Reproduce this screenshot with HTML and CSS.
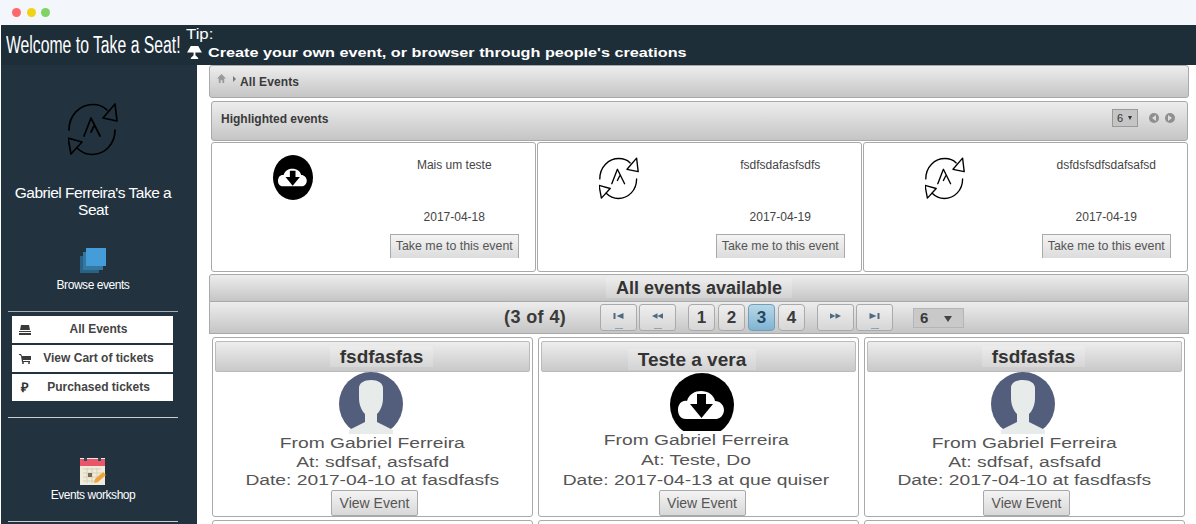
FILE: index.html
```html
<!DOCTYPE html>
<html lang="en">
<head>
    <meta charset="UTF-8">
    <title>Take a Seat</title>
    <link rel="stylesheet" href="styles.css">
</head>
<body>
    <svg class="defs" width="0" height="0">
        <symbol id="logo" viewBox="0 0 50 53">
            <g fill="none" stroke="#000" stroke-width="1.700" stroke-linejoin="round" stroke-linecap="round">
                <path d="M1 27 C1 12 12 1.500 25 1.500 C30 1.500 35 3 39 7"/>
                <path d="M47 27 C47 41 37 51.500 24 51.500 C18 51.500 13 49 9 45"/>
                <path d="M47 1 L49 18 L35 15 Z"/>
                <path d="M0 35 L14 39 L3 51 Z"/>
                <path d="M16 33 L23 15 L32 33 M26 23 L23 29"/>
            </g>
        </symbol>
        <symbol id="cloud" viewBox="0 0 64 64">
            <path d="M16 46 C10 46 8 41 8 37 C8 31 12 27 17 28 C19 21 25 18 31 18 C38 18 44 22 45 28 C50 28 54 32 54 37 C54 42 50 46 46 46 Z" fill="#fff"/>
            <path d="M27 21 H36 V31 H43 L31.500 45 L20 31 H27 Z" fill="#000"/>
        </symbol>
        <symbol id="person" viewBox="0 0 64 62">
            <circle cx="32" cy="32" r="32" fill="#535d7c"/>
            <path d="M10 62 L10 58 L26 50 L26 42 C22 38 20 32 20 26 L20 16 C20 11 25 8 32 8 C39 8 44 11 44 16 L44 26 C44 32 42 38 38 42 L38 50 L54 58 L54 62 Z" fill="#e7ebea"/>
        </symbol>
    </svg>

    <div class="chrome">
        <span class="dot dot-red"></span>
        <span class="dot dot-yellow"></span>
        <span class="dot dot-green"></span>
    </div>

    <header class="topbar">
        <h1 class="welcome">Welcome to Take a Seat!</h1>
        <div class="tip">
            <div class="tip-label">Tip:</div>
            <div class="tip-row">
                <svg class="lamp" viewBox="0 0 16 14"><path d="M4 0 H12 L16 7 H0 Z M7 7 H9 V10 L12 13 V14 H4 V13 L7 10 Z" fill="#fff"/></svg>
                <span class="tip-text">Create your own event, or browser through people's creations</span>
            </div>
        </div>
    </header>

    <div class="layout">
        <aside class="sidebar">
            <svg class="side-logo"><use href="#logo"/></svg>
            <div class="side-name">Gabriel Ferreira's Take a Seat</div>

            <svg class="side-icon side-icon-browse" viewBox="0 0 26 25">
                <rect x="0" y="8" width="19" height="17" fill="#2a6187"/>
                <rect x="3" y="4" width="20" height="18" fill="#35789f"/>
                <rect x="6" y="0" width="20" height="18" fill="#449cd9"/>
            </svg>
            <div class="side-label side-label-browse">Browse events</div>
            <div class="side-rule side-rule-first"></div>

            <nav class="menu">
                <a class="menu-item">
                    <svg class="menu-icon" viewBox="0 0 12 10"><path d="M2 0 H10 L11 5 H1 Z M0 6 H12 V7 H0 Z M0 8 H12 V10 H0 Z" fill="#3a3a3a"/></svg>
                    <span class="menu-text">All Events</span>
                </a>
                <a class="menu-item">
                    <svg class="menu-icon" viewBox="0 0 12 10"><path d="M0 0 H2 L3 2 H12 V6 H4 L4 7 H11 V8 H3 L2 2 L1 1 H0 Z" fill="#3a3a3a"/><circle cx="4" cy="9" r="1" fill="#3a3a3a"/><circle cx="10" cy="9" r="1" fill="#3a3a3a"/></svg>
                    <span class="menu-text">View Cart of tickets</span>
                </a>
                <a class="menu-item">
                    <span class="menu-icon menu-glyph">₽</span>
                    <span class="menu-text">Purchased tickets</span>
                </a>
            </nav>
            <div class="side-rule side-rule-second"></div>

            <svg class="side-icon side-icon-workshop" viewBox="0 0 26 27">
                <rect x="0" y="0" width="25" height="27" fill="#f0ecd9"/>
                <rect x="0" y="1" width="25" height="7" fill="#e9566b"/>
                <rect x="4" y="0" width="3" height="3" fill="#2b4a5e"/>
                <rect x="18" y="0" width="3" height="3" fill="#2b4a5e"/>
                <path d="M3 11 H21 M3 15 H21 M3 19 H21 M3 23 H17 M7 10 V25 M12 10 V25 M17 10 V25" stroke="#d5d0ba" fill="none"/>
                <rect x="8" y="15" width="4" height="4" fill="#7a6a58"/>
                <path d="M14 25 L15 21 L23 14 L26 17 L18 24 Z" fill="#f0a33c"/>
            </svg>
            <div class="side-label side-label-workshop">Events workshop</div>
            <div class="side-rule side-rule-third"></div>
        </aside>

        <main class="content">
            <div class="bar breadcrumb">
                <svg class="crumb-home" viewBox="0 0 10 10"><path d="M5 0 L10 5 H8 V10 H6 V7 H4 V10 H2 V5 H0 Z" fill="#9a9a9a"/></svg>
                <span class="crumb-caret"></span>
                <span class="crumb-text">All Events</span>
            </div>

            <section class="highlight">
                <div class="bar highlight-head">
                    <span class="highlight-title">Highlighted events</span>
                    <span class="mini-select">6 <i class="mini-arrow"></i></span>
                    <span class="mini-nav mini-prev"></span>
                    <span class="mini-nav mini-next"></span>
                </div>
                <div class="highlight-grid">
                    <div class="hl-card">
                        <div class="hl-media"><svg class="hl-cloud"><use href="#cloud"/></svg></div>
                        <div class="hl-info">
                            <div class="hl-name">Mais um teste</div>
                            <div class="hl-date">2017-04-18</div>
                            <button class="hl-btn">Take me to this event</button>
                        </div>
                    </div>
                    <div class="hl-card">
                        <div class="hl-media"><svg class="hl-logo"><use href="#logo"/></svg></div>
                        <div class="hl-info">
                            <div class="hl-name">fsdfsdafasfsdfs</div>
                            <div class="hl-date">2017-04-19</div>
                            <button class="hl-btn">Take me to this event</button>
                        </div>
                    </div>
                    <div class="hl-card">
                        <div class="hl-media"><svg class="hl-logo"><use href="#logo"/></svg></div>
                        <div class="hl-info">
                            <div class="hl-name">dsfdsfsdfsdafsafsd</div>
                            <div class="hl-date">2017-04-19</div>
                            <button class="hl-btn">Take me to this event</button>
                        </div>
                    </div>
                </div>
            </section>

            <div class="bar all-head"><span class="strip">All events available</span></div>
            <div class="bar pager">
                <span class="pager-count">(3 of 4)</span>
                <span class="pg-btn pg-first"><svg viewBox="0 0 10 6"><path d="M0 0 H2 V6 H0 Z M10 0 V6 L3 3 Z" fill="#4c6a80"/></svg></span>
                <span class="pg-btn pg-prev"><svg viewBox="0 0 12 6"><path d="M0 3 L6 0 V6 Z M6 3 L12 0 V6 Z" fill="#4c6a80"/></svg></span>
                <span class="pg-num">1</span>
                <span class="pg-num">2</span>
                <span class="pg-num pg-active">3</span>
                <span class="pg-num">4</span>
                <span class="pg-btn pg-next"><svg viewBox="0 0 12 6"><path d="M0 0 L6 3 L0 6 Z M6 0 L12 3 L6 6 Z" fill="#4c6a80"/></svg></span>
                <span class="pg-btn pg-last"><svg viewBox="0 0 10 6"><path d="M0 0 L7 3 L0 6 Z M8 0 H10 V6 H8 Z" fill="#4c6a80"/></svg></span>
                <span class="pg-select">6 <i class="pg-arrow"></i></span>
            </div>

            <div class="events">
                <article class="event">
                    <h3 class="event-title"><span class="strip strip-a">fsdfasfas</span></h3>
                    <svg class="event-img"><use href="#person"/></svg>
                    <div class="event-lines">
                        <p><span class="stretch">From Gabriel Ferreira</span></p>
                        <p><span class="stretch">At: sdfsaf, asfsafd</span></p>
                        <p><span class="stretch">Date: 2017-04-10 at fasdfasfs</span></p>
                    </div>
                    <button class="event-btn">View Event</button>
                </article>
                <article class="event event-cloud">
                    <h3 class="event-title"><span class="strip strip-b">Teste a vera</span></h3>
                    <svg class="event-img" viewBox="0 0 64 58">
                        <circle cx="32" cy="32" r="32" fill="#000"/>
                        <use href="#cloud" width="64" height="64"/>
                    </svg>
                    <div class="event-lines">
                        <p><span class="stretch">From Gabriel Ferreira</span></p>
                        <p><span class="stretch">At: Teste, Do</span></p>
                        <p><span class="stretch">Date: 2017-04-13 at que quiser</span></p>
                    </div>
                    <button class="event-btn">View Event</button>
                </article>
                <article class="event">
                    <h3 class="event-title"><span class="strip strip-a">fsdfasfas</span></h3>
                    <svg class="event-img"><use href="#person"/></svg>
                    <div class="event-lines">
                        <p><span class="stretch">From Gabriel Ferreira</span></p>
                        <p><span class="stretch">At: sdfsaf, asfsafd</span></p>
                        <p><span class="stretch">Date: 2017-04-10 at fasdfasfs</span></p>
                    </div>
                    <button class="event-btn">View Event</button>
                </article>
                <article class="event"></article>
                <article class="event"></article>
                <article class="event"></article>
            </div>
        </main>
    </div>
</body>
</html>
```

FILE: styles.css
```css
html, body {
    height: 524px;
    overflow: hidden;
}
body {
    margin: 0;
    background-color: #fff;
    font-family: "Liberation Sans", Arial, sans-serif;
    color: #333;
}
.defs {
    position: absolute;
}

/* window chrome */
.chrome {
    height: 25px;
    background-color: #f3f6fa;
    display: flex;
    align-items: center;
    padding-left: 12px;
    gap: 5.500px;
}
.dot {
    width: 9px;
    height: 9px;
    border-radius: 50%;
}
.dot-red { background-color: #fc6a6e; }
.dot-yellow { background-color: #f2d214; }
.dot-green { background-color: #7fd264; }

/* top bar */
.topbar {
    height: 40px;
    margin-left: 1px;
    background-color: #1e2e39;
    color: #fff;
    display: flex;
}
.welcome {
    width: 185px;
    margin: 0;
    padding-left: 5px;
    box-sizing: border-box;
    font-size: 23px;
    font-weight: normal;
    line-height: 40px;
    white-space: nowrap;
    transform: scaleX(0.685);
    transform-origin: 5px 0;
}
.tip {
    font-size: 14px;
}
.tip-label {
    line-height: 16px;
    margin-top: 1px;
    transform: scaleX(1.2);
    transform-origin: 0 0;
}
.tip-row {
    display: flex;
    align-items: center;
    margin-top: 1px;
    height: 18px;
}
.lamp {
    width: 15px;
    height: 13px;
    margin: 0 6px 0 1px;
}
.tip-text {
    white-space: nowrap;
    font-weight: bold;
    font-size: 13px;
    transform: scaleX(1.247);
    transform-origin: 0 0;
}

.layout {
    display: flex;
    align-items: flex-start;
}

/* sidebar */
.sidebar {
    width: 196px;
    height: 459px;
    margin-left: 1px;
    flex: none;
    background-color: #22333f;
    color: #fff;
    display: flex;
    flex-direction: column;
    align-items: center;
    padding-right: 12px;
    box-sizing: border-box;
    overflow: hidden;
}
.side-logo {
    width: 50px;
    height: 53px;
    margin-top: 38px;
    flex: none;
}
.side-name {
    width: 170px;
    margin-top: 28px;
    font-size: 15.500px;
    line-height: 17px;
    text-align: center;
    letter-spacing: -0.5px;
}
.side-icon {
    flex: none;
    width: 26px;
}
.side-icon-browse {
    height: 25px;
    margin-top: 30px;
}
.side-icon-workshop {
    height: 27px;
    margin-top: 40px;
}
.side-label {
    font-size: 12px;
    line-height: 14px;
    white-space: nowrap;
    letter-spacing: -0.45px;
}
.side-label-browse {
    margin-top: 5px;
}
.side-label-workshop {
    margin-top: 3px;
}
.side-rule {
    width: 170px;
    height: 1px;
    flex: none;
    background-color: #c8cfd4;
}
.side-rule-first { margin-top: 19px; background-color: #a3adb3; }
.side-rule-second { margin-top: 16px; }
.side-rule-third { margin-top: 19px; }

.menu {
    width: 161px;
    margin: 4px 2px 0 0;
    display: flex;
    flex-direction: column;
    gap: 2px;
}
.menu-item {
    height: 27px;
    padding: 0 6px 0 7px;
    background-color: #fff;
    display: flex;
    align-items: center;
    color: #444;
    font-size: 12px;
    font-weight: bold;
}
.menu-icon {
    width: 12px;
    height: 10px;
    flex: none;
}
.menu-glyph {
    height: auto;
    font-size: 13px;
    line-height: 14px;
    text-align: center;
    color: #333;
}
.menu-text {
    flex: 1;
    padding-bottom: 2px;
    text-align: center;
    white-space: nowrap;
}

/* main column */
.content {
    margin-left: 12px;
    width: 980px;
    height: 459px;
    overflow: hidden;
    flex: none;
}
.bar {
    background: linear-gradient(#ededed, #c5c5c5);
    border: 1px solid #a9a9a9;
    box-sizing: border-box;
    font-weight: bold;
    color: #3a3a3a;
}
.breadcrumb {
    height: 33px;
    border-radius: 3px;
    display: flex;
    align-items: center;
    font-size: 12px;
    padding-left: 7px;
}
.crumb-home {
    width: 9px;
    height: 9px;
    margin-bottom: 7px;
}
.crumb-caret {
    width: 0;
    height: 0;
    margin: 0 4px 6px 7px;
    border-left: 3px solid #777;
    border-top: 3px solid transparent;
    border-bottom: 3px solid transparent;
}
.crumb-text {
    letter-spacing: 0.1px;
}

.highlight {
    margin: 3px 1px 0 2px;
}
.highlight-head {
    height: 40px;
    border-radius: 3px;
    display: flex;
    align-items: center;
    font-size: 12px;
    padding-left: 9px;
}
.highlight-title {
    flex: 1;
    padding-bottom: 4px;
}
.mini-select {
    width: 26px;
    height: 18px;
    margin: 0 11px 6px 0;
    box-sizing: border-box;
    padding-left: 4px;
    background-color: #c5c5c5;
    border: 1px solid #999;
    font-weight: normal;
    font-size: 11px;
    line-height: 16px;
    color: #333;
}
.mini-arrow {
    display: inline-block;
    border-top: 4px solid #333;
    border-left: 2.500px solid transparent;
    border-right: 2.500px solid transparent;
    margin: 0 0 2px 2px;
}
.mini-nav {
    width: 10px;
    height: 10px;
    margin: 0 6px 6px 0;
    border-radius: 50%;
    background-color: #8f8f8f;
    display: flex;
    align-items: center;
    justify-content: center;
}
.mini-nav::after {
    content: "";
    border-top: 3px solid transparent;
    border-bottom: 3px solid transparent;
}
.mini-prev::after { border-right: 4px solid #ddd; }
.mini-next::after { border-left: 4px solid #ddd; }
.mini-next {
    margin-right: 12px;
}
.highlight-grid {
    margin-top: 1px;
    display: grid;
    grid-template-columns: 325px 325px 325px;
    gap: 1px;
}
.hl-card {
    height: 130px;
    box-sizing: border-box;
    border: 1px solid #a9a9a9;
    border-radius: 3px;
    background-color: #fff;
    display: grid;
    grid-template-columns: 1fr 1fr;
}
.hl-media {
    display: flex;
    justify-content: center;
    padding-top: 12px;
}
.hl-cloud {
    width: 40px;
    height: 45px;
    margin-left: 1px;
    background-color: #000;
    border-radius: 50%;
}
.hl-logo {
    width: 40px;
    height: 43px;
    margin: 2px 0 0 1px;
}
.hl-info {
    display: flex;
    flex-direction: column;
    align-items: center;
    font-size: 12px;
    color: #444;
}
.hl-name {
    margin-top: 15px;
    line-height: 14px;
}
.hl-date {
    margin-top: 38px;
    line-height: 14px;
}
.hl-btn {
    width: 129px;
    height: 24px;
    margin-top: 10px;
    padding: 0 0 2px;
    background: linear-gradient(#f4f4f4, #dcdcdc);
    border: 1px solid #a9a9a9;
    border-bottom: none;
    font-family: inherit;
    font-size: 12.400px;
    color: #555;
}

/* all events */
.all-head {
    height: 28px;
    margin-top: 2px;
    font-size: 18px;
    line-height: 26px;
    text-align: center;
    border-radius: 3px 3px 0 0;
    color: #333;
}
.pager {
    height: 32px;
    display: flex;
    align-items: center;
    border-top: none;
    font-size: 17px;
    padding-left: 294px;
    color: #3a3a3a;
}
.pager-count {
    width: 96px;
    flex: none;
    font-size: 18px;
    letter-spacing: 0.4px;
}
.pg-btn {
    width: 37px;
    height: 27px;
    box-sizing: border-box;
    margin-right: 2px;
    border: 1px solid #aaa;
    border-radius: 3px;
    background: linear-gradient(#efefef, #d6d6d6);
    display: flex;
    flex-direction: column;
    align-items: center;
    padding-top: 8px;
}
.pg-btn svg {
    width: 11px;
    height: 6px;
    flex: none;
}
.pg-first::after,
.pg-prev::after,
.pg-last::after {
    content: "";
    width: 8px;
    height: 1px;
    margin-top: 9px;
    background-color: #8ea2b1;
}
.pg-prev { margin-right: 12px; }
.pg-next { margin-left: 9px; }
.pg-last { margin-right: 20px; }
.pg-num {
    width: 27px;
    height: 27px;
    box-sizing: border-box;
    margin: -1px 3px 0 0;
    border: 1px solid #aaa;
    border-radius: 4px;
    background: linear-gradient(#efefef, #d6d6d6);
    text-align: center;
    line-height: 25px;
}
.pg-active {
    background: linear-gradient(#b9d8e8, #7fb3d2);
    border-color: #6e9fbd;
    color: #24475f;
}
.pg-select {
    width: 51px;
    height: 20px;
    box-sizing: border-box;
    padding-left: 6px;
    background-color: #c9c9c9;
    border: 1px solid #b5b5b5;
    font-size: 15px;
    line-height: 18px;
}
.pg-arrow {
    display: inline-block;
    border-top: 6px solid #444;
    border-left: 4px solid transparent;
    border-right: 4px solid transparent;
    margin: 0 0 1px 11px;
}
.events {
    margin: 3px 0 0 3px;
    display: grid;
    grid-template-columns: 321px 321px 321px;
    grid-auto-rows: 180px;
    gap: 3px 5px;
}
.event {
    box-sizing: border-box;
    border: 1px solid #a9a9a9;
    border-radius: 3px;
    display: flex;
    flex-direction: column;
    align-items: center;
    padding: 3px 1px 0;
}
.event-title {
    width: 315px;
    height: 31px;
    margin: 0;
    flex: none;
    background: linear-gradient(#ededed, #c9c9c9);
    border: 1px solid #bbb;
    border-radius: 2px;
    box-sizing: border-box;
    text-align: center;
    font-size: 19px;
    line-height: 30px;
    color: #333;
}
.strip {
    padding: 0 10px;
    background-color: rgba(255, 255, 255, 0.18);
}
.strip-a {
    margin-left: 18px;
}
.strip-b {
    margin-left: -13px;
    position: relative;
    top: 3px;
}
.event-img {
    width: 64px;
    height: 62px;
    flex: none;
    margin-right: 3px;
}
.event-cloud .event-img {
    height: 58px;
    margin: 1px 0 0 6px;
}
.event-lines {
    font-size: 14px;
    line-height: 18.500px;
    text-align: center;
    color: #555;
    white-space: nowrap;
}
.event-cloud .event-lines {
    margin: -1px 5px 0 0;
    line-height: 20px;
}
.event-lines p {
    margin: 0;
}
.stretch {
    display: inline-block;
    transform: scaleX(1.375);
}
.event-btn {
    width: 87px;
    height: 26px;
    padding: 0;
    margin: 0 0 0 4px;
    background: linear-gradient(#f4f4f4, #d8d8d8);
    border: 1px solid #a9a9a9;
    border-radius: 2px;
    font-family: inherit;
    font-size: 14px;
    color: #555;
}
.event-cloud .event-btn {
    margin: 0 0 0 7px;
}
```
